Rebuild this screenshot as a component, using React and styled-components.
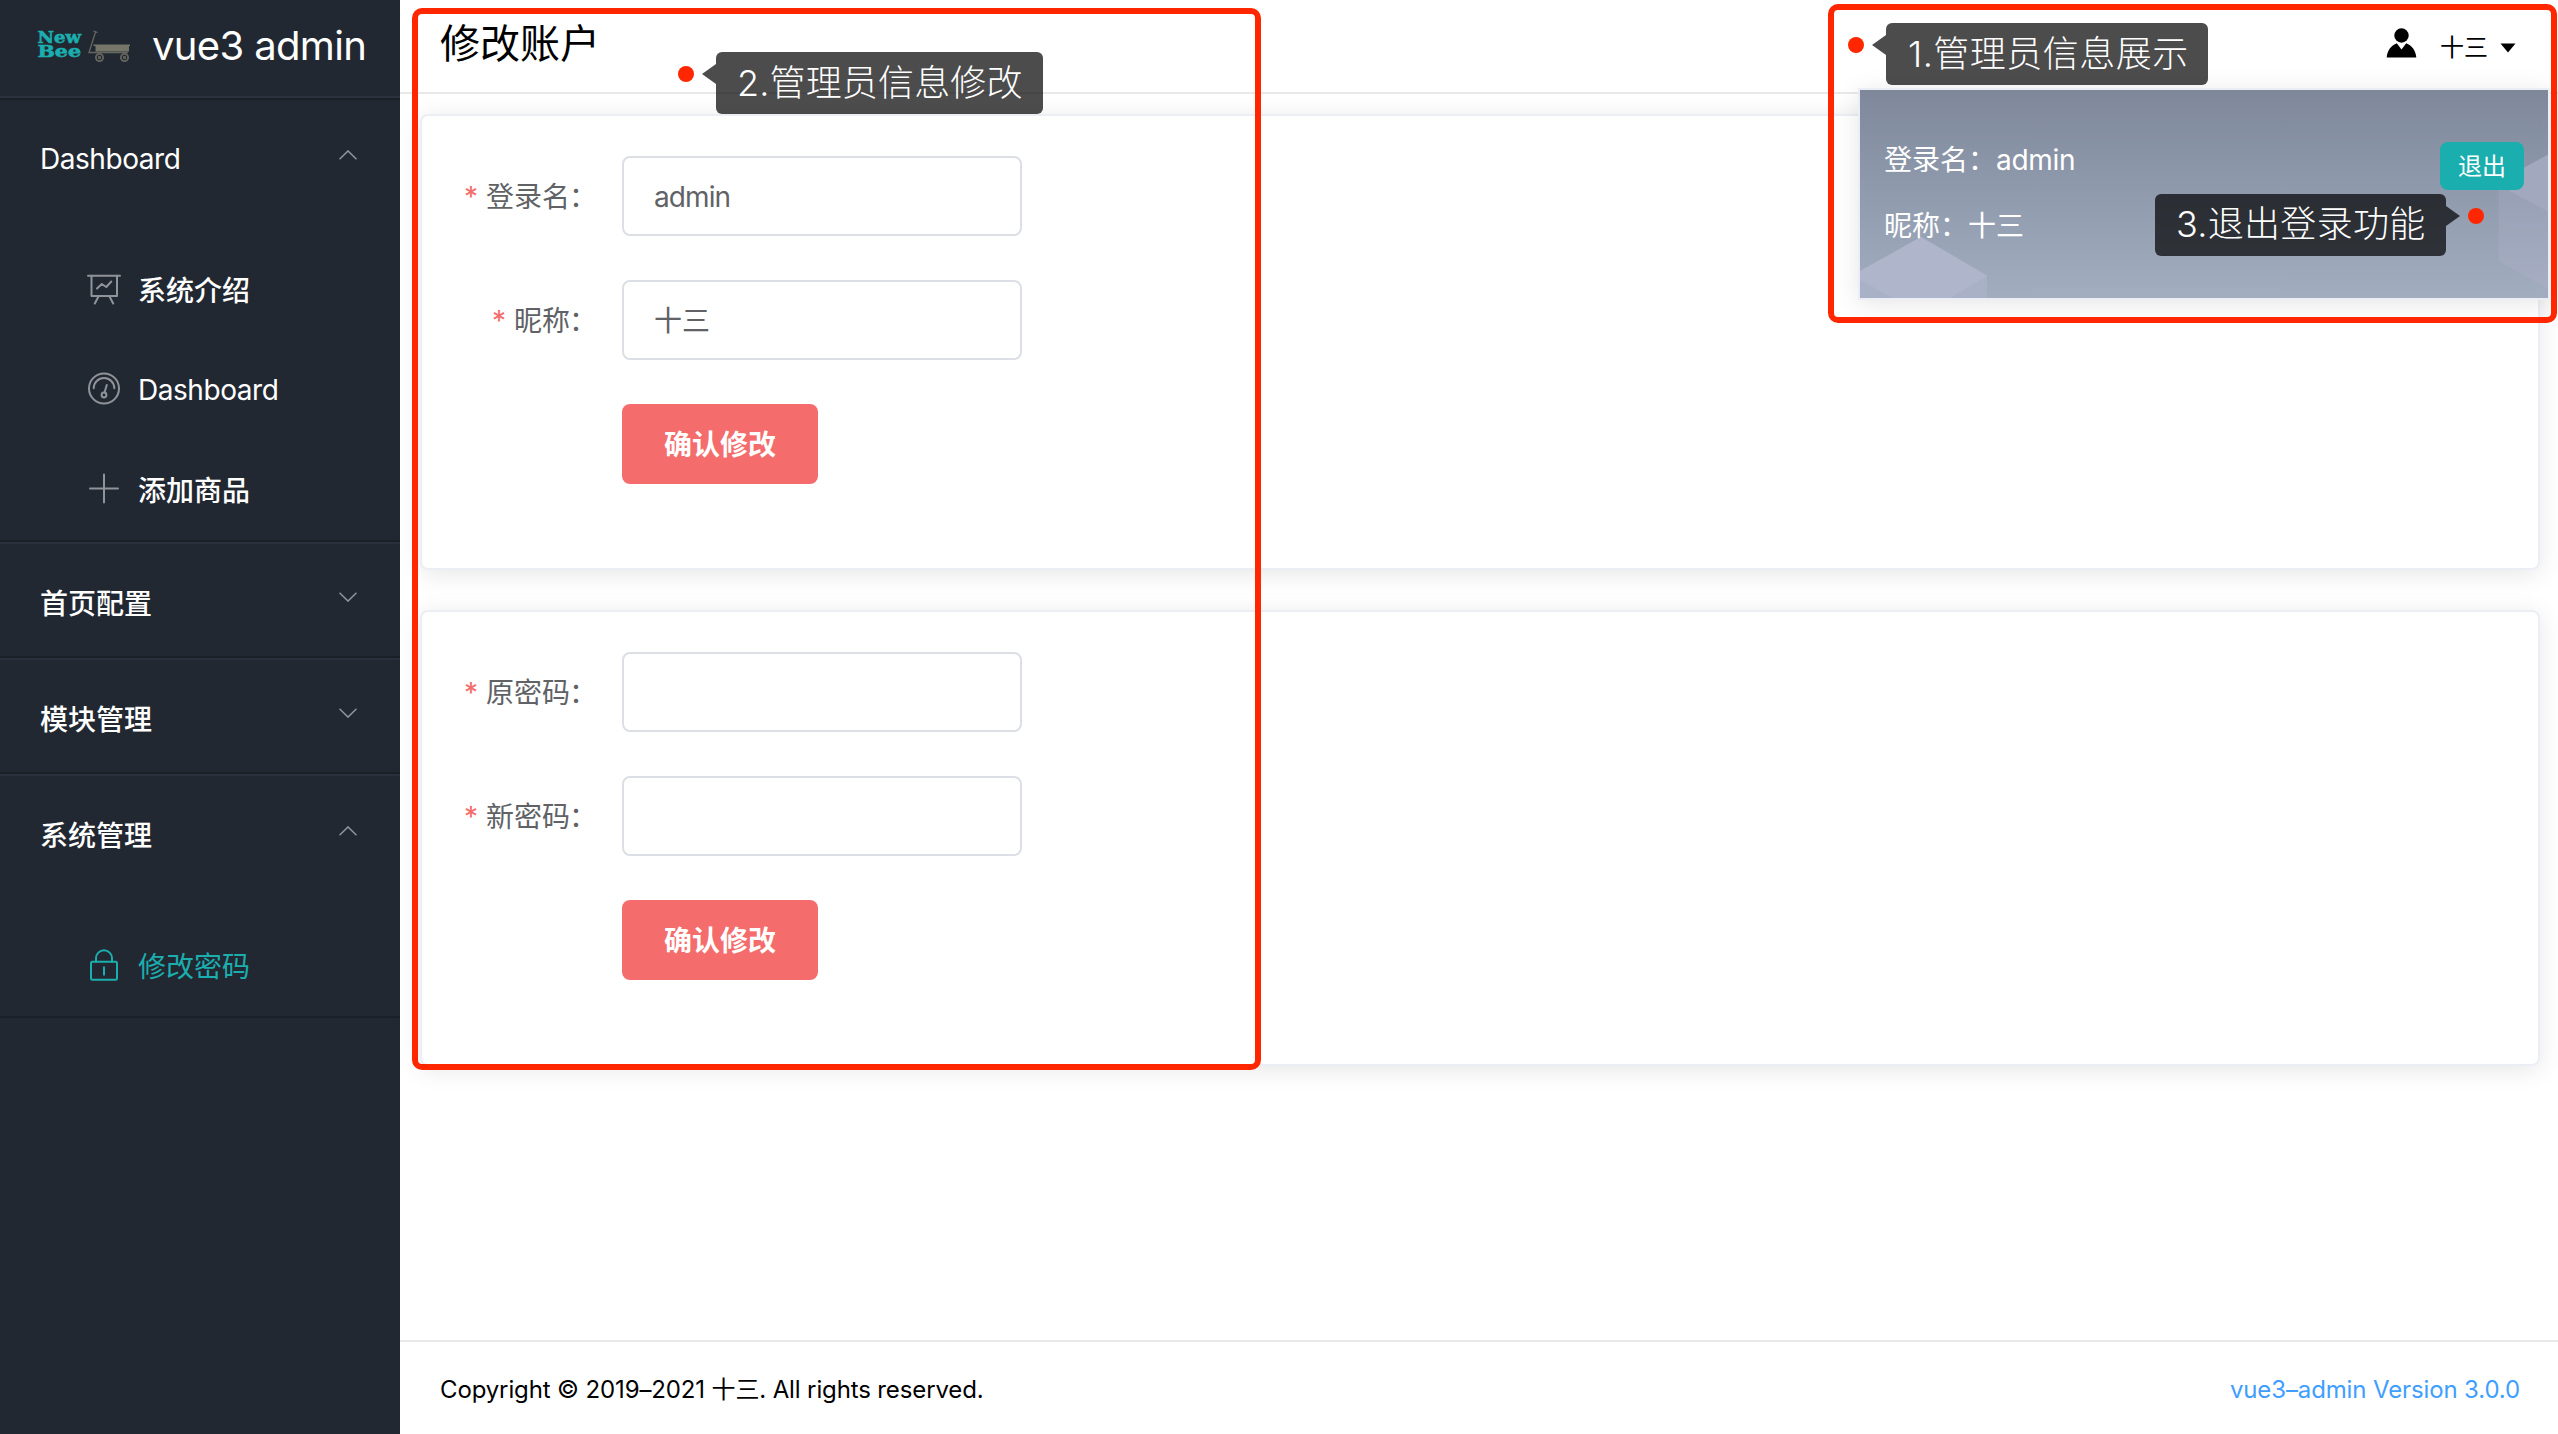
import React from 'react';
import styled, { createGlobalStyle, css } from 'styled-components';

const Global = createGlobalStyle`
  * { box-sizing: border-box; }
  html, body { margin: 0; padding: 0; background: #fff; }
  body {
    font-family: Inter, "Noto Sans CJK SC", sans-serif;
    color: #000;
    overflow: hidden;
  }
`;

const Layout = styled.div`
  position: relative;
  display: flex;
  width: 2558px;
  height: 1434px;
  overflow: hidden;
`;

const Aside = styled.aside`
  width: 400px;
  flex: none;
  background: #222832;
  color: #fff;
`;

const Brand = styled.div`
  display: flex;
  align-items: center;
  height: 98px;
  padding: 0 0 4px 36px;
  border-bottom: 2px solid #2d333e;
`;

const BrandName = styled.span`
  margin-left: 20px;
  font-size: 40px;
  line-height: 60px;
  letter-spacing: -0.65px;
  white-space: nowrap;
`;

const Menu = styled.nav`
  border-top: 2px solid #1b1f28;
`;

const Group = styled.section`
  border-top: ${(p) => (p.$first ? '0' : '2px solid #2b313c')};
  border-bottom: 2px solid #1b1f28;
`;

const GroupTitle = styled.div`
  display: flex;
  align-items: center;
  justify-content: space-between;
  height: 112px;
  padding: ${(p) => (p.$latin ? 6 : 3)}px 43px 0 40px;
  font-size: 28px;
  font-weight: ${(p) => (p.$latin ? 400 : 500)};
  letter-spacing: ${(p) => (p.$latin ? '-0.45px' : '0')};

  svg { margin-top: ${(p) => (p.$latin ? -9 : p.$open ? -6 : -9)}px; }
`;

const Items = styled.div`
  padding-top: 28px;
`;

const Item = styled.div`
  display: flex;
  align-items: center;
  gap: 14px;
  height: 100px;
  padding-left: 84px;
  font-size: 28px;
  font-weight: ${(p) => (p.$active || p.$latin ? 400 : 500)};
  letter-spacing: ${(p) => (p.$latin ? '-0.45px' : '0')};
  color: ${(p) => (p.$active ? '#1baeae' : '#fff')};

  svg { color: ${(p) => (p.$active ? '#1baeae' : '#909399')}; }
  span { padding-bottom: ${(p) => (p.$latin ? 0 : 3)}px; }
`;

const Main = styled.main`
  display: flex;
  flex: 1;
  flex-direction: column;
  min-width: 0;
`;

const Header = styled.header`
  display: flex;
  align-items: center;
  justify-content: space-between;
  height: 94px;
  padding: 0 42px 4px 40px;
  border-bottom: 2px solid #e9e9e9;
`;

const PageTitle = styled.h1`
  margin: 0;
  font-size: 40px;
  font-weight: 400;
  line-height: 60px;
`;

const User = styled.div`
  display: flex;
  align-items: center;
  padding-top: 8px;
  font-size: 24px;
  line-height: 36px;

  span { margin: 0 12px 0 23px; }
  svg:first-child { margin-top: -11px; }
`;

const Content = styled.div`
  display: flex;
  flex: 1;
  flex-direction: column;
  gap: 40px;
  padding: 20px 18px 0 20px;
`;

const Card = styled.section`
  display: flex;
  flex-direction: column;
  gap: 44px;
  height: 456px;
  padding: 40px;
  border: 2px solid #ebeef5;
  border-radius: 8px;
  background: #fff;
  box-shadow: 0 4px 24px rgba(0, 0, 0, 0.1);
`;

const Field = styled.div`
  display: flex;
  align-items: center;
  height: 80px;
`;

const Label = styled.label`
  width: 160px;
  padding: 0 24px 3px 0;
  text-align: right;
  white-space: nowrap;
  font-size: 28px;
  color: #606266;

  &::before {
    content: ${(p) => (p.$required ? "'*'" : 'none')};
    margin-right: 8px;
    color: #f56c6c;
  }
`;

const Colon = styled.span`
  display: inline-block;
  width: 28px;
  text-indent: -1px;
  text-align: left;
`;

const Input = styled.input`
  width: 400px;
  height: 80px;
  padding: ${(p) => (p.$latin ? '1px 30px 0' : '0 30px 2px')};
  border: 2px solid #dcdfe6;
  border-radius: 8px;
  background: #fff;
  color: #606266;
  font: inherit;
  font-size: 28px;
  letter-spacing: ${(p) => (p.$latin ? '-0.9px' : '0')};
  outline: none;
`;

const buttonBase = css`
  border: 0;
  border-radius: 8px;
  color: #fff;
  font-family: inherit;
`;

const Submit = styled.button`
  ${buttonBase}
  width: 196px;
  height: 80px;
  padding: 0 0 2px;
  background: #f56c6c;
  font-size: 28px;
  font-weight: 700;
`;

const Footer = styled.footer`
  display: flex;
  align-items: center;
  justify-content: space-between;
  height: 94px;
  padding: 3px 38px 0 40px;
  border-top: 2px solid #e9e9e9;
  font-size: 24px;
  letter-spacing: -0.13px;
`;

const Copyright = styled.span`
  padding-bottom: 4px;
`;

const Version = styled.a`
  color: #409eff;
`;

const Popover = styled.div`
  position: absolute;
  left: 1858px;
  top: 88px;
  width: 692px;
  height: 212px;
  border: 2px solid #ebeef5;
  background: linear-gradient(#7e889a, #a2adc0);
  box-shadow: 0 4px 24px rgba(0, 0, 0, 0.1);
  color: #fff;
  font-size: 28px;
`;

const PopoverArt = styled.svg`
  position: absolute;
  inset: 0;
`;

const PopoverBody = styled.div`
  position: relative;
  display: flex;
  justify-content: space-between;
  padding: 50px 24px 0 24px;
`;

const Info = styled.div`
  display: flex;
  flex-direction: column;
  gap: 26px;
  line-height: 40px;
`;

const LoginName = styled.span`
  letter-spacing: -0.3px;
`;

const Logout = styled.button`
  ${buttonBase}
  width: 84px;
  height: 48px;
  margin-top: 2px;
  padding: 0 0 4px;
  background: #1baeae;
  font-size: 24px;
`;

const Outline = styled.div`
  position: absolute;
  left: ${(p) => p.$x}px;
  top: ${(p) => p.$y}px;
  width: ${(p) => p.$w}px;
  height: ${(p) => p.$h}px;
  border: 6px solid #ff2600;
  border-radius: 10px;
  pointer-events: none;
`;

const Dot = styled.i`
  flex: none;
  width: 16px;
  height: 16px;
  margin-top: 14px;
  border-radius: 50%;
  background: #ff2600;
`;

const Note = styled.div`
  position: absolute;
  left: ${(p) => p.$x}px;
  top: ${(p) => p.$y}px;
  display: flex;
  flex-direction: ${(p) => (p.$right ? 'row-reverse' : 'row')};
  align-items: flex-start;
  gap: 8px;
`;

const Tip = styled.div`
  display: flex;
  flex-direction: ${(p) => (p.$right ? 'row-reverse' : 'row')};
  align-items: flex-start;

  &::before {
    content: '';
    width: 14px;
    height: 20px;
    margin-top: 12px;
    background: rgba(0, 0, 0, 0.7);
    clip-path: ${(p) =>
      p.$right ? 'polygon(0 0, 100% 50%, 0 100%)' : 'polygon(100% 0, 0 50%, 100% 100%)'};
  }
`;

const TipText = styled.div`
  width: ${(p) => p.$w}px;
  height: 62px;
  padding-left: ${(p) => p.$pad || 22}px;
  border-radius: 6px;
  background: rgba(0, 0, 0, 0.7);
  color: #fff;
  font-size: 36px;
  font-weight: 300;
  line-height: ${(p) => p.$line || 62}px;
  letter-spacing: ${(p) => p.$spacing}px;
  white-space: nowrap;
`;

const Logo = () => (
  <svg width="96" height="40" viewBox="36 26 96 40">
    <g fill="#1baeae" fontFamily="'DejaVu Serif', serif" fontWeight="700" stroke="#1baeae" strokeWidth=".6">
      <text x="37.500" y="42.800" fontSize="16.500" textLength="43.500" lengthAdjust="spacingAndGlyphs">New</text>
      <text x="37.500" y="57.300" fontSize="16.500" textLength="43.500" lengthAdjust="spacingAndGlyphs">Bee</text>
    </g>
    <g fill="none" stroke="#67675f" strokeWidth="1.3">
      <path d="M93.500 31l4 1.500M95.500 32L89 52.500h39" />
      <circle cx="99.500" cy="57.500" r="3.600" strokeWidth="1.800" />
      <circle cx="124.500" cy="57.500" r="3.600" strokeWidth="1.800" />
      <circle cx="99.500" cy="57.500" r="1" />
      <circle cx="124.500" cy="57.500" r="1" />
    </g>
    <path d="M93.500 44.500H130v1.500h-1v5.500H95.500V46h-2z" fill="#75756a" />
  </svg>
);

const Chevron = ({ up }) => (
  <svg width="18" height="10" viewBox="0 0 18 10" fill="none" stroke="#909399" strokeWidth="1.500">
    <path d={up ? 'M.5 9.300L9 .9l8.500 8.400' : 'M.5.7L9 9.100 17.500.7'} />
  </svg>
);

const icons = {
  board: (
    <>
      <path d="M4 5.700h32" />
      <path d="M7.500 5.700v20.300h25.500V5.700M14.500 26.500l-3.700 7M25.500 26.500l3.700 7" />
      <path d="M13 18.500l4.800-4.500 4.500 3L27.300 11.500" />
    </>
  ),
  gauge: (
    <>
      <circle cx="20" cy="18.500" r="15" />
      <path d="M9.700 18.300a10.300 10.300 0 0 1 20.600 0M22.800 15l-2.300 7.500" />
      <circle cx="20" cy="25" r="2.400" />
    </>
  ),
  plus: <path d="M20 4.500v28M6 18.500h28" />,
  lock: (
    <>
      <rect x="7" y="15.800" width="26" height="18" rx="1.500" />
      <path d="M12 15.800v-3.500a8 8 0 0 1 16 0v3.500M20 21.300v7.500" />
    </>
  ),
};

const MenuIcon = ({ name }) => (
  <svg width="40" height="40" viewBox="0 0 40 40" fill="none" stroke="currentColor" strokeWidth="2" strokeLinecap="round" strokeLinejoin="round">
    {icons[name]}
  </svg>
);

const Person = () => (
  <svg width="31" height="30" viewBox="0 0 31 30">
    <circle cx="15.500" cy="7.500" r="7.200" />
    <path d="M.7 29.500C1.300 22 5.500 17.500 10.800 15.300L15.500 21.500 20.200 15.300C25.500 17.500 29.700 22 30.300 29.500z" />
  </svg>
);

const groups = [
  {
    title: 'Dashboard',
    latin: true,
    items: [
      { icon: 'board', text: '系统介绍' },
      { icon: 'gauge', text: 'Dashboard', latin: true },
      { icon: 'plus', text: '添加商品' },
    ],
  },
  { title: '首页配置' },
  { title: '模块管理' },
  { title: '系统管理', items: [{ icon: 'lock', text: '修改密码', active: true }] },
];

const forms = [
  [
    { label: '登录名', value: 'admin', type: 'text', latin: true },
    { label: '昵称', value: '十三', type: 'text' },
  ],
  [
    { label: '原密码', value: '', type: 'password' },
    { label: '新密码', value: '', type: 'password' },
  ],
];

export default function App() {
  return (
    <Layout>
      <Global />
      <Aside>
        <Brand>
          <Logo />
          <BrandName>vue3 admin</BrandName>
        </Brand>
        <Menu>
          {groups.map((g, i) => (
            <Group key={g.title} $first={i === 0}>
              <GroupTitle $latin={g.latin} $open={!!g.items}>
                {g.title}
                <Chevron up={!!g.items} />
              </GroupTitle>
              {g.items && (
                <Items>
                  {g.items.map((it) => (
                    <Item key={it.text} $active={it.active} $latin={it.latin}>
                      <MenuIcon name={it.icon} />
                      <span>{it.text}</span>
                    </Item>
                  ))}
                </Items>
              )}
            </Group>
          ))}
        </Menu>
      </Aside>
      <Main>
        <Header>
          <PageTitle>修改账户</PageTitle>
          <User>
            <Person />
            <span>十三</span>
            <svg width="16" height="10" viewBox="0 0 16 10"><path d="M.5.500h15L8 9.500z" /></svg>
          </User>
        </Header>
        <Content>
          {forms.map((fields) => (
            <Card key={fields[0].label}>
              {fields.map((f) => (
                <Field key={f.label}>
                  <Label $required>{f.label}<Colon>：</Colon></Label>
                  <Input type={f.type} defaultValue={f.value} $latin={f.latin} />
                </Field>
              ))}
              <Field>
                <Label />
                <Submit>确认修改</Submit>
              </Field>
            </Card>
          ))}
        </Content>
        <Footer>
          <Copyright>Copyright © 2019–2021 十三. All rights reserved.</Copyright>
          <Version>vue3–admin Version 3.0.0</Version>
        </Footer>
      </Main>

      <Popover>
        <PopoverArt width="688" height="208" viewBox="1860 90 688 208">
          <defs>
            <linearGradient id="side" x1="0" y1="0" x2="0" y2="1">
              <stop offset="0" stopColor="#969fb3" />
              <stop offset="1" stopColor="#a7aec3" />
            </linearGradient>
          </defs>
          <path d="M1860 271l61-34 66 38v23h-127z" fill="#a8b1c5" />
          <path d="M1860 271l61-34 66 39-37 22h-58l-32-18z" fill="#afb5ca" />
          <path d="M2498.700 184v77l49.300 28v-77z" fill="url(#side)" />
          <path d="M2548 154.500l-49 27v3.500l49 27z" fill="#a2a8bd" />
        </PopoverArt>
        <PopoverBody>
          <Info>
            <div>登录名：<LoginName>admin</LoginName></div>
            <div>昵称：十三</div>
          </Info>
          <Logout>退出</Logout>
        </PopoverBody>
      </Popover>

      <Outline $x={412} $y={8} $w={849} $h={1062} />
      <Outline $x={1828} $y={4} $w={729} $h={319} />
      <Note $x={1848} $y={23}>
        <Dot />
        <Tip><TipText $w={322} $spacing={0.5}>1.管理员信息展示</TipText></Tip>
      </Note>
      <Note $x={678} $y={52}>
        <Dot />
        <Tip><TipText $w={327} $spacing={0.15} $pad={21} $line={63}>2.管理员信息修改</TipText></Tip>
      </Note>
      <Note $x={2155} $y={194} $right>
        <Dot />
        <Tip $right><TipText $w={291} $spacing={0.3} $pad={21} $line={60}>3.退出登录功能</TipText></Tip>
      </Note>
    </Layout>
  );
}
